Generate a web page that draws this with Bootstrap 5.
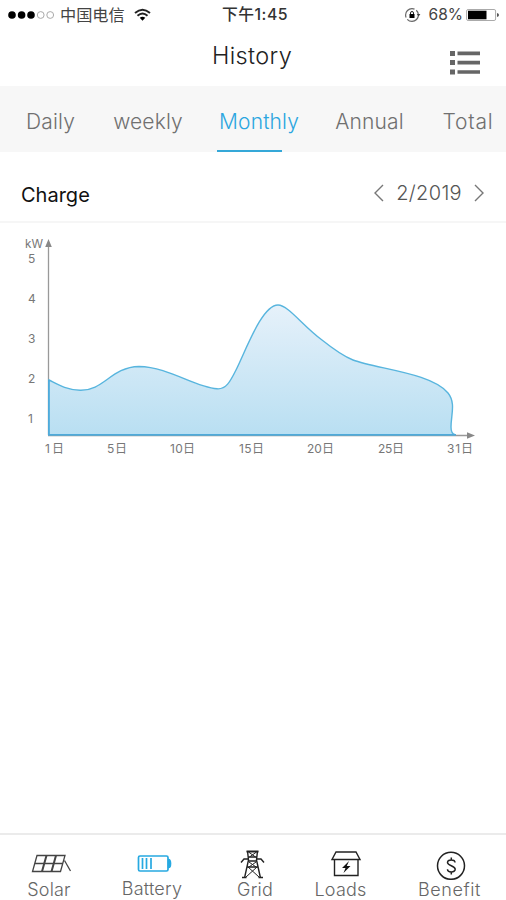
<!DOCTYPE html>
<html lang="en">
<head>
<meta charset="utf-8">
<meta name="viewport" content="width=device-width, initial-scale=1">
<title>History</title>
<link href="https://cdn.jsdelivr.net/npm/bootstrap@5.3.0/dist/css/bootstrap.min.css" rel="stylesheet">
<style>
body{font-family:Inter,"Noto Sans CJK SC",sans-serif;color:#222;background:#fff;font-weight:300}
.screen{width:506px;height:900px;overflow:hidden}
svg{display:block;flex:none}
.status{height:28px;line-height:28px;font-size:15px;padding:0 6px 0 7px;display:grid;grid-template-columns:1fr auto 1fr}
.carrier{font-size:16.2px;font-weight:400;margin:0 9px 0 5px;color:#444;white-space:nowrap}
.clock{font-weight:500;letter-spacing:.5px;font-size:15.8px;line-height:30px;white-space:nowrap;padding-left:3px;color:#333}
.pct{font-size:15.5px;font-weight:400;line-height:30px;margin:0 3px 0 8px;color:#444}
.titlebar{height:58px;padding:0 25px 0 212px}
.titlebar h1{font-size:23.5px;font-weight:300;line-height:56px;letter-spacing:.35px}
.tabs{height:66px;background:#f7f7f7}
.tabs a{color:#707070;font-size:21px;line-height:71px;letter-spacing:.15px;text-decoration:none;text-align:center;white-space:nowrap}
.t1{width:101px}.t2{width:94px}.t3{width:128px}.t4{width:93px}.t5{width:90px;padding-left:14px}
.tabs .t5{letter-spacing:.8px}
.tabs a.active{color:#2ba6e0;position:relative}
.tabs a.active::after{content:"";position:absolute;left:22px;bottom:0;width:65px;height:2px;background:#35a8d8}
.range{height:71px;padding:13px 22px 0 21px;border-bottom:2px solid #f6f6f6}
.range h2{font-size:20px;font-weight:400;color:#111;line-height:24px;padding-top:3px}
.period{font-size:20px;color:#555;line-height:60px;letter-spacing:.35px}
.dock{height:67px;border-top:2px solid #ebebeb;padding-top:10px}
.dock a{color:#666;font-size:18px;line-height:20px;letter-spacing:.2px;text-decoration:none;white-space:nowrap}
.d1{width:98px}.d2{width:108px}.d3{width:98px}.d4{width:73px}.d5{width:129px;padding-left:16px}
.dock .d5{letter-spacing:.55px}
.d2 span{margin-top:-1px}
</style>
</head>
<body>
<div class="screen d-flex flex-column mx-auto">
  <header>
    <div class="status">
      <div class="d-flex align-items-center">
        <svg width="48" height="10"><g fill="#000"><circle cx="5" cy="5" r="3.8"/><circle cx="14.6" cy="5" r="3.8"/><circle cx="24" cy="5" r="3.8"/></g><g fill="none" stroke="#aaa"><circle cx="33.7" cy="5" r="3.4"/><circle cx="43.2" cy="5" r="3.4"/></g></svg>
        <span class="carrier">中国电信</span>
        <svg width="17" height="14" viewBox="0 0 17 14" fill="none" stroke="#222" stroke-width="1.9"><path d="M1 5Q8.5-1.500 16 5M3.500 7.700Q8.500 3.200 13.500 7.700"/><path d="M5.700 9.800Q8.500 7.600 11.300 9.800L8.500 12.800Z" fill="#000" stroke="none"/></svg>
      </div>
      <div class="clock">下午1:45</div>
      <div class="d-flex align-items-center justify-content-end">
        <svg width="17" height="16" viewBox="0 0 17 16"><circle cx="8" cy="8" r="6.400" fill="none" stroke="#666" stroke-width="1.200" stroke-dasharray="15 2"/><path d="M5.500 7h5v4h-5z"/><path d="M6.500 7V6a1.500 1.500 0 0 1 3 0v1" fill="none" stroke="#222"/><path d="M12.800 7h3.600l-1.800 2.500z" fill="#444"/></svg>
        <span class="pct">68%</span>
        <svg width="34" height="14"><rect x=".6" y="1.500" width="29" height="11" rx="1.500" fill="#fff" stroke="#aaa"/><path d="M2 2.700h18.500v8.600H2z"/><path d="M31 5v4q2-.5 2-2t-2-2z" fill="#555"/></svg>
      </div>
    </div>
    <div class="titlebar d-flex justify-content-between">
      <h1 class="mb-0">History</h1>
      <svg width="31" height="58" fill="#666"><path d="M0 23h5v5H0zM0 32h5v5H0zM0 41.500h5v5H0z"/><path d="M7.500 23.600h22.500v3.600H7.500zM7.500 32.800h22.500v3.600H7.500zM7.500 42.200h22.500v3.600H7.500z"/></svg>
    </div>
  </header>
  <nav class="tabs d-flex">
    <a href="#" class="t1">Daily</a><a href="#" class="t2">weekly</a><a href="#" class="t3 active">Monthly</a><a href="#" class="t4">Annual</a><a href="#" class="t5">Total</a>
  </nav>
  <main class="flex-grow-1">
    <div class="range d-flex justify-content-between align-items-center">
      <h2 class="mb-0">Charge</h2>
      <div class="period d-flex align-items-center">
        <svg width="10" height="18" fill="none" stroke="#777" stroke-width="1.400"><path d="M9 1 1 9l8 8"/></svg>
        <span class="mx-2 px-1">2/2019</span>
        <svg width="10" height="18" fill="none" stroke="#777" stroke-width="1.400"><path d="m1 1 8 8-8 8"/></svg>
      </div>
    </div>
    <svg width="506" height="245" viewBox="0 223 506 245">
      <defs><linearGradient id="area" x1="0" y1="305" x2="0" y2="434" gradientUnits="userSpaceOnUse"><stop offset="0" stop-color="#e6f1fa"/><stop offset="1" stop-color="#b9dff2"/></linearGradient></defs>
      <path d="M48.500 435V244M48 435.500H467" fill="none" stroke="#999" stroke-width="1.300"/>
      <path d="M48.500 239l3.300 8h-6.600zM475 435.500l-8 3.300v-6.600z" fill="#888"/>
      <path d="M49 380C57 384 66 390 80 390.300C104 391 111 367 139 366.500C169 367 194 387 217 388.800C226 389.500 230 382 236 370C246 350 262 305 278 305C288 305 302 325 322 340C332 348 343 356 353 360C377 369 432 373 448 393C456 403 451 415 451 427C451 432 452 434 455 434.700H49Z" fill="url(#area)" stroke="#58b5de" stroke-width="1.400"/>
      <path d="M48.800 435V380M48 434.700H456" stroke="#4faada" stroke-width="1.600" fill="none"/>
      <g font-size="12" fill="#777" font-weight="400">
        <text x="25" y="248" textLength="18" lengthAdjust="spacingAndGlyphs" font-size="11.500">kW</text>
        <text x="28" y="263">5</text><text x="28" y="303">4</text><text x="28" y="343">3</text><text x="28" y="383">2</text><text x="28" y="423">1</text>
        <text x="45" y="453" textLength="19">1日</text><text x="107" y="453" textLength="20">5日</text><text x="170" y="453" textLength="25">10日</text><text x="239" y="453" textLength="25">15日</text><text x="307" y="453" textLength="27">20日</text><text x="378" y="453" textLength="26">25日</text><text x="447" y="453" textLength="26">31日</text>
      </g>
    </svg>
  </main>
  <nav class="dock d-flex">
    <a href="#" class="d1 d-flex flex-column align-items-center">
      <svg width="60" height="35" viewBox="19 845 60 35" fill="none" stroke="#444" stroke-width="1.300"><path d="M37 855.500h28l-4.500 16H32.500zM34.700 863.500h28.500"/><path d="M46.500 855.500l-4.500 16M56 855.500l-4.500 16" stroke-width="2"/><path d="M64.500 860.500l6 10.500"/></svg><span>Solar</span></a>
    <a href="#" class="d2 d-flex flex-column align-items-center">
      <svg width="60" height="35" viewBox="122 845 60 35" fill="none" stroke="#27a9e1" stroke-width="1.700"><rect x="138.500" y="856" width="29.500" height="15" rx="1.500"/><path d="M142.500 858v11M146.500 858v11M151 858v11"/><path d="M168.500 859.500q2 0 2 4t-2 4z" fill="#27a9e1"/></svg><span>Battery</span></a>
    <a href="#" class="d3 d-flex flex-column align-items-center">
      <svg width="60" height="35" viewBox="225 845 60 35" fill="none" stroke="#222" stroke-width="1.400"><path d="M246.500 851.500h12" stroke-width="2"/><path d="M247.500 851l1 9-4 18M257.500 851l-1 9 4 18M248.500 857h8M248 861h9M246.800 867h11.500M242 877.500h4.500M258.500 877.500h4.500"/><path d="M248 859h-4l-3 3.500M257 859h4l3 3.500"/><path d="M248 867l11 10M257 867l-11 10M249 862l7 5M256 862l-7 5M248.500 852l7 5M256.500 852l-7 5" stroke-width="1"/></svg><span>Grid</span></a>
    <a href="#" class="d4 d-flex flex-column align-items-center">
      <svg width="60" height="35" viewBox="310.500 845 60 35" fill="none" stroke="#222" stroke-width="1.400"><path d="M335.500 852h20l4 7.500H331.500zM334 859.500v16h23.500v-16"/><path d="M348.500 861l-7 7h3.500l-2 5 7-7h-3.700z" fill="#111" stroke="none"/></svg><span>Loads</span></a>
    <a href="#" class="d5 d-flex flex-column align-items-center">
      <svg width="60" height="35" viewBox="419.500 845 60 35" fill="none" stroke="#222" stroke-width="1.500"><circle cx="450.500" cy="865.800" r="13.500"/><path d="M454.500 862.500c0-3.500-7.500-3.500-7.500 0s7.700 3 7.700 6.700-7.700 3.500-7.700 0M450.800 857.500v2.800M450.800 871.800v2.700"/></svg><span>Benefit</span></a>
  </nav>
</div>
<script src="https://cdn.jsdelivr.net/npm/bootstrap@5.3.0/dist/js/bootstrap.bundle.min.js"></script>
</body>
</html>
